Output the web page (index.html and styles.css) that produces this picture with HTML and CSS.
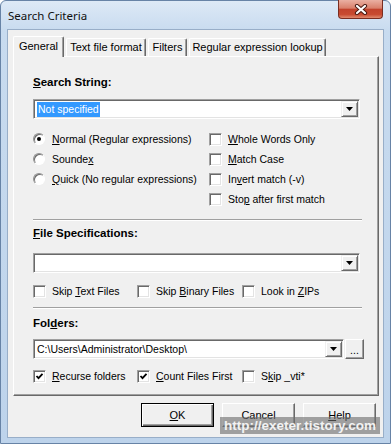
FILE: index.html
```html
<!DOCTYPE html>
<html>
<head>
    <title>Search Criteria</title>
    <link rel="stylesheet" href="styles.css">
</head>
<body>
    <div class="window">
        <div class="titlebar">
            <span class="title">Search Criteria</span>
            <div class="close">
                <svg width="14" height="11" viewBox="0 0 14 11">
                    <path d="M3 2 L11 9 M11 2 L3 9" stroke="#4a1a12" stroke-width="4.2" stroke-linecap="round"/>
                    <path d="M3 2 L11 9 M11 2 L3 9" stroke="#fff" stroke-width="2.2" stroke-linecap="round"/>
                </svg>
            </div>
        </div>

        <div class="client">
            <div class="tabs">
                <div class="tab active tabGeneral">General</div>
                <div class="tab tabText">Text file format</div>
                <div class="tab tabFilters">Filters</div>
                <div class="tab tabRegex">Regular expression lookup</div>
            </div>

            <div class="panel">
                <div class="heading firstHeading"><u>S</u>earch String:</div>
                <div class="combo comboSearch">
                    <div class="comboText"><span class="selected">Not specified</span></div>
                    <div class="drop"><svg width="7" height="4" viewBox="0 0 7 4"><polygon points="0,0 7,0 3.5,4" fill="#000"/></svg></div>
                </div>

                <div class="options">
                    <div class="colLeft">
                        <div class="opt"><span class="radio on"></span><span><u>N</u>ormal (Regular expressions)</span></div>
                        <div class="opt"><span class="radio"></span><span>Sounde<u>x</u></span></div>
                        <div class="opt"><span class="radio"></span><span><u>Q</u>uick (No regular expressions)</span></div>
                    </div>
                    <div class="colRight">
                        <div class="opt"><span class="check"></span><span><u>W</u>hole Words Only</span></div>
                        <div class="opt"><span class="check"></span><span><u>M</u>atch Case</span></div>
                        <div class="opt"><span class="check"></span><span>In<u>v</u>ert match (-v)</span></div>
                        <div class="opt"><span class="check"></span><span>Sto<u>p</u> after first match</span></div>
                    </div>
                </div>

                <div class="separator sepOne"></div>

                <div class="heading headingFiles"><u>F</u>ile Specifications:</div>
                <div class="combo comboFiles">
                    <div class="comboText"></div>
                    <div class="drop"><svg width="7" height="4" viewBox="0 0 7 4"><polygon points="0,0 7,0 3.5,4" fill="#000"/></svg></div>
                </div>

                <div class="checkRow rowFiles">
                    <div class="opt item1"><span class="check"></span><span>Skip <u>T</u>ext Files</span></div>
                    <div class="opt item2"><span class="check"></span><span>Skip <u>B</u>inary Files</span></div>
                    <div class="opt"><span class="check"></span><span>Look in <u>Z</u>IPs</span></div>
                </div>

                <div class="separator sepTwo"></div>

                <div class="heading headingFolders">Fol<u>d</u>ers:</div>
                <div class="folderRow">
                    <div class="combo comboFolders">
                        <div class="comboText">C:\Users\Administrator\Desktop\</div>
                        <div class="drop"><svg width="7" height="4" viewBox="0 0 7 4"><polygon points="0,0 7,0 3.5,4" fill="#000"/></svg></div>
                    </div>
                    <div class="browse">...</div>
                </div>

                <div class="checkRow rowFolders">
                    <div class="opt item1"><span class="check on"><svg width="9" height="9" viewBox="0 0 9 9"><polyline points="1.5,4 3.5,6.2 7.5,1.8" fill="none" stroke="#000" stroke-width="1.8"/></svg></span><span><u>R</u>ecurse folders</span></div>
                    <div class="opt item2"><span class="check on"><svg width="9" height="9" viewBox="0 0 9 9"><polyline points="1.5,4 3.5,6.2 7.5,1.8" fill="none" stroke="#000" stroke-width="1.8"/></svg></span><span><u>C</u>ount Files First</span></div>
                    <div class="opt"><span class="check"></span><span>S<u>k</u>ip _vti*</span></div>
                </div>
            </div>

            <div class="buttons">
                <div class="button default"><u>O</u>K</div>
                <div class="button">Cancel</div>
                <div class="button"><u>H</u>elp</div>
            </div>
        </div>

        <div class="watermark">http://exeter.tistory.com</div>
    </div>
</body>
</html>
```

FILE: styles.css
```css
body {
    margin: 0;
    font-family: "Liberation Sans", Arial, sans-serif;
    font-size: 10.5px;
    color: #000;
}
.window {
    position: relative;
    width: 391px;
    height: 444px;
    box-sizing: border-box;
    border: 1px solid #6783a6;
    border-radius: 6px 6px 0 0;
    background: linear-gradient(#dde9f6, #c8dbef 30px, #bdd3eb);
}
.titlebar {
    height: 28px;
    display: flex;
    align-items: center;
    padding: 0 7px 0 7px;
}
.title {
    font-family: "Noto Sans", "Liberation Sans", sans-serif;
    font-size: 11.5px;
    color: #111;
    flex: 1;
}
.close {
    align-self: flex-start;
    width: 45px;
    height: 19px;
    margin-top: -1px;
    box-sizing: border-box;
    border: 1px solid #7a2d20;
    border-top: none;
    border-radius: 0 0 4px 4px;
    background: linear-gradient(#eab0a2, #d9806b 45%, #c2432c 52%, #c84a30 80%, #e08a6e);
    display: flex;
    align-items: center;
    justify-content: center;
}
.client {
    margin-left: 6px;
    width: 363px;
    height: 401px;
    border: 1px solid #98aec8;
    background: #f0f0f0;
    padding: 6px 7px 0 5px;
}

/* tabs */
.tabs {
    display: flex;
    align-items: flex-end;
    height: 20px;
    position: relative;
    z-index: 1;
}
.tab {
    height: 18px;
    box-sizing: border-box;
    border-top: 1px solid #fff;
    border-left: 1px solid #fff;
    border-right: 1px solid #696969;
    box-shadow: inset -1px 0 0 #a0a0a0;
    border-radius: 2px 2px 0 0;
    padding-top: 2px;
    text-align: center;
    background: #f0f0f0;
    font-size: 11px;
}
.tab.active {
    height: 21px;
    margin-bottom: -1px;
    padding-top: 3px;
}
.tabGeneral { width: 51px; }
.tabText { width: 80px; margin-left: 2px; }
.tabFilters { width: 39px; margin-left: 2px; }
.tabRegex { width: 137px; margin-left: 2px; }

.panel {
    width: 366px;
    height: 340px;
    box-sizing: border-box;
    border: 1px solid;
    border-color: #fff #696969 #696969 #fff;
    box-shadow: inset -1px -1px 0 #a0a0a0;
    padding: 0 18px 0 19px;
}

.heading {
    height: 14px;
    line-height: 14px;
    font-weight: bold;
    font-size: 11.5px;
}
.firstHeading { margin-top: 18px; }
.headingFiles { margin-top: 5px; }
.headingFolders { margin-top: 7px; }

/* combo boxes */
.combo {
    display: flex;
    height: 20px;
    box-sizing: border-box;
    border: 1px solid;
    border-color: #a0a0a0 #fff #fff #a0a0a0;
    box-shadow: inset 1px 1px 0 #696969, inset -1px -1px 0 #e3e3e3;
    background: #fff;
    padding: 2px 1px 1px 2px;
}
.comboText {
    flex: 1;
    line-height: 15px;
    padding-left: 1px;
    white-space: nowrap;
    overflow: hidden;
}
.selected {
    background: #3399ff;
    color: #fff;
    padding: 0 1px;
    display: inline-block;
    line-height: 15px;
}
.drop {
    width: 17px;
    height: 16px;
    box-sizing: border-box;
    margin-top: -1px;
    border: 1px solid;
    border-color: #f0f0f0 #696969 #696969 #f0f0f0;
    box-shadow: inset 1px 1px 0 #fff, inset -1px -1px 0 #a0a0a0;
    background: #f0f0f0;
    display: flex;
    align-items: center;
    justify-content: center;
}
.comboSearch { margin-top: 10px; }
.comboFiles { margin-top: 13px; }
.folderRow {
    display: flex;
    margin-top: 9px;
    margin-right: -4px;
}
.comboFolders { width: 311px; }
.browse {
    width: 19px;
    height: 20px;
    margin-left: 1px;
    box-sizing: border-box;
    border: 1px solid;
    border-color: #fff #696969 #696969 #fff;
    box-shadow: inset -1px -1px 0 #a0a0a0;
    text-align: center;
    line-height: 20px;
}

/* options */
.options {
    display: flex;
    margin-top: 10px;
}
.colLeft { width: 176px; }
.opt {
    display: flex;
    align-items: center;
    height: 20px;
    gap: 6px;
    white-space: nowrap;
}
.radio {
    width: 12px;
    height: 12px;
    box-sizing: border-box;
    border-radius: 50%;
    border: 1px solid;
    border-color: #909090 #fff #fff #909090;
    box-shadow: inset 1px 1px 0 #6a6a6a;
    background: #fff;
    display: flex;
    align-items: center;
    justify-content: center;
    margin-right: 1px;
}
.radio.on::after {
    content: "";
    width: 4px;
    height: 4px;
    border-radius: 50%;
    background: #000;
}
.check {
    width: 13px;
    height: 13px;
    box-sizing: border-box;
    border: 1px solid;
    border-color: #a0a0a0 #fff #fff #a0a0a0;
    box-shadow: inset 1px 1px 0 #696969, inset -1px -1px 0 #e3e3e3;
    background: #fff;
    display: flex;
    align-items: center;
    justify-content: center;
}

.separator {
    height: 0;
    border-top: 1px solid #a0a0a0;
    border-bottom: 1px solid #fff;
    margin-right: -2px;
}
.sepOne { margin-top: 10px; }
.sepTwo { margin-top: 6px; }

.checkRow { display: flex; }
.checkRow .item1 { width: 104px; }
.checkRow .item2 { width: 105px; }
.rowFiles { margin-top: 8px; }
.rowFolders { margin-top: 7px; }

/* buttons */
.buttons {
    display: flex;
    justify-content: flex-end;
    gap: 8px;
    margin-top: 7px;
    font-size: 11px;
}
.button {
    width: 73px;
    height: 24px;
    box-sizing: border-box;
    border: 1px solid;
    border-color: #fff #696969 #696969 #fff;
    box-shadow: inset -1px -1px 0 #a0a0a0;
    text-align: center;
    line-height: 22px;
}
.button.default {
    border: 1px solid #000;
    box-shadow: inset 1px 1px 0 #fff, inset -1px -1px 0 #696969, inset -2px -2px 0 #a0a0a0;
}

.watermark {
    position: absolute;
    left: 219px;
    top: 416px;
    width: 160px;
    height: 17px;
    background: rgba(110, 110, 110, 0.62);
    color: #f2f2f2;
    font-family: "Liberation Sans", Arial, sans-serif;
    font-weight: bold;
    font-size: 13.5px;
    line-height: 17px;
    text-align: center;
    white-space: nowrap;
    overflow: hidden;
}
```
